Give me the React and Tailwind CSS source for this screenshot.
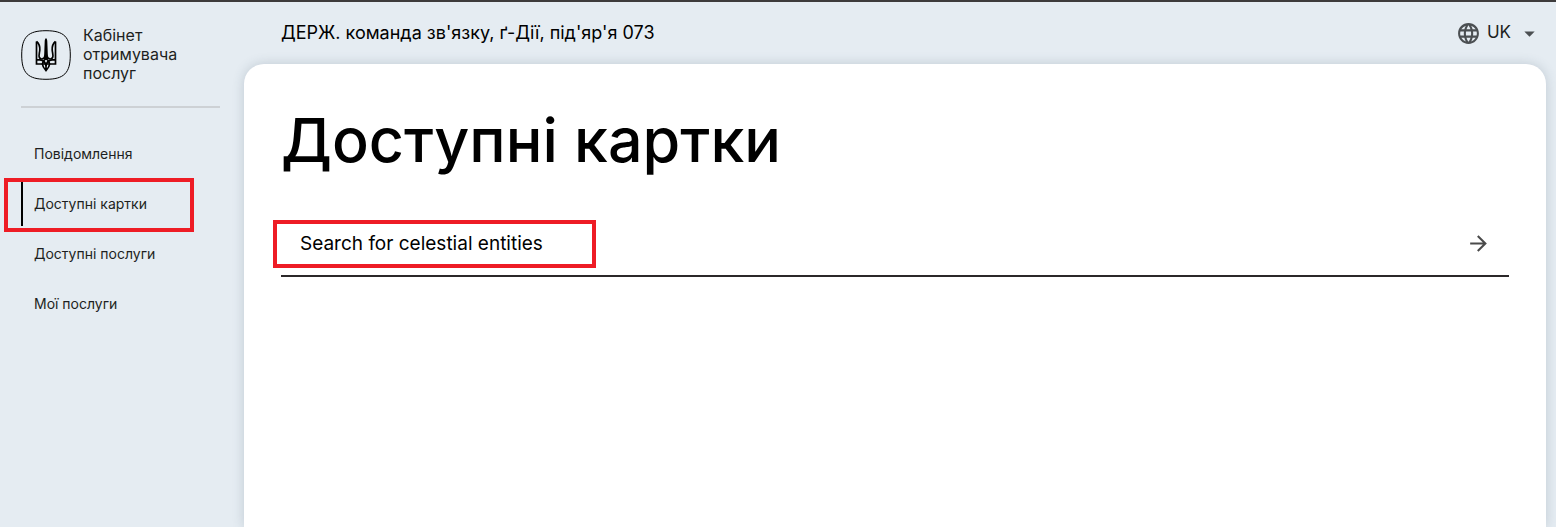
import React from "react";
import { MdArrowDropDown, MdArrowForward, MdLanguage } from "react-icons/md";

const navItems = [
  { label: "Повідомлення" },
  { label: "Доступні картки", active: true },
  { label: "Доступні послуги" },
  { label: "Мої послуги" },
];

function Trident() {
  return (
    <svg viewBox="0 0 50 50" className="size-[50px] shrink-0" fill="none" stroke="#000" aria-hidden="true">
      <path
        d="M25 0.7C43 0.7 49.3 7 49.3 25S43 49.3 25 49.3 0.7 43 0.7 25 7 0.7 25 0.7Z"
        strokeWidth="1"
      />
      <path d="M25 8C25.900 9 26.300 10 26.300 11.500L26.800 24C26.900 26.500 27.600 28.200 28.800 29H21.200C22.400 28.200 23.100 26.500 23.200 24L23.700 11.500C23.700 10 24.100 9 25 8Z" fill="#000" stroke="none" />
      <g strokeWidth="1.7" strokeLinejoin="miter">
        <path d="M15.500 11.500V34H34.500V11.500" />
        <path d="M15.500 11.500C18.500 14 19 17 18.800 20C18.600 23 17.400 25.500 18.400 27.500C19.400 29.400 22 29.600 22.800 27.600" />
        <path d="M34.500 11.500C31.500 14 31 17 31.200 20C31.400 23 32.600 25.500 31.600 27.500C30.600 29.400 28 29.600 27.200 27.600" />
        <path d="M15.500 29.800H19C22.500 30.200 24.600 32 25 36C25.400 32 27.500 30.200 31 29.800H34.500" />
        <path d="M21.400 34C21.600 37 23 38.400 25 40.600C27 38.400 28.400 37 28.600 34C28.400 31.500 27 30 25 28.400C23 30 21.600 31.500 21.400 34ZM25 34V40" />
      </g>
    </svg>
  );
}

function Sidebar() {
  return (
    <aside className="w-[244px] shrink-0 pt-6 pr-6 pl-[21px]">
      <a href="#" className="flex items-center gap-3 border-b-2 border-[#cdd1d5] pb-[23px] text-[#1d1f21]">
        <Trident />
        <span className="text-base leading-[19px]">
          Кабінет
          <br />
          отримувача
          <br />
          послуг
        </span>
      </a>
      <nav className="mt-6">
        <ul className="flex flex-col gap-1.5">
          {navItems.map((item) => (
            <li key={item.label} className="relative">
              <a
                href="#"
                aria-current={item.active ? "page" : undefined}
                className={
                  "flex h-11 items-center border-l-2 pl-[11px] text-sm text-[#1d1f21] " +
                  (item.active ? "border-black" : "border-transparent")
                }
              >
                {item.label}
              </a>
              {item.active && (
                <span className="pointer-events-none absolute -top-1 right-[26px] -bottom-1.5 -left-[17px] border-4 border-[#ee1c25]" />
              )}
            </li>
          ))}
        </ul>
      </nav>
    </aside>
  );
}

export default function App() {
  return (
    <div className="flex min-h-screen border-t-2 border-[#3d3b3c] bg-[#e5ecf2] font-['Inter','Noto_Sans',sans-serif] text-black">
      <Sidebar />
      <div className="flex min-w-0 grow flex-col pr-2.5">
        <header className="flex h-[62px] items-center justify-between pr-1 pl-[37px]">
          <span className="text-lg">ДЕРЖ. команда зв'язку, ґ-Дії, під'яр'я 073</span>
          <button type="button" className="flex items-center gap-1.5 text-[17px] text-[#1d1f21]">
            <MdLanguage className="size-[25px] text-[#4b4f52]" />
            UK
            <MdArrowDropDown className="size-[25px] text-[#4b4f52]" />
          </button>
        </header>
        <main className="grow rounded-t-[20px] bg-white px-[37px] pt-10 shadow-[0_0_12px_rgba(60,80,100,0.22)]">
          <h1 className="text-[61px] leading-[72px] font-medium">Доступні картки</h1>
          <div className="mt-9 border-b-2 border-[#2b2829]">
            <a href="#" className="flex h-[63px] items-center justify-between pr-[18px] pl-[19px]">
              <span className="relative text-[19px] leading-7">
                Search for celestial entities
                <span className="pointer-events-none absolute -top-[10px] -right-[53px] -bottom-[10px] -left-[27px] border-4 border-[#ee1c25]" />
              </span>
              <MdArrowForward className="size-[25px] text-[#4a4a4a]" />
            </a>
          </div>
        </main>
      </div>
    </div>
  );
}
